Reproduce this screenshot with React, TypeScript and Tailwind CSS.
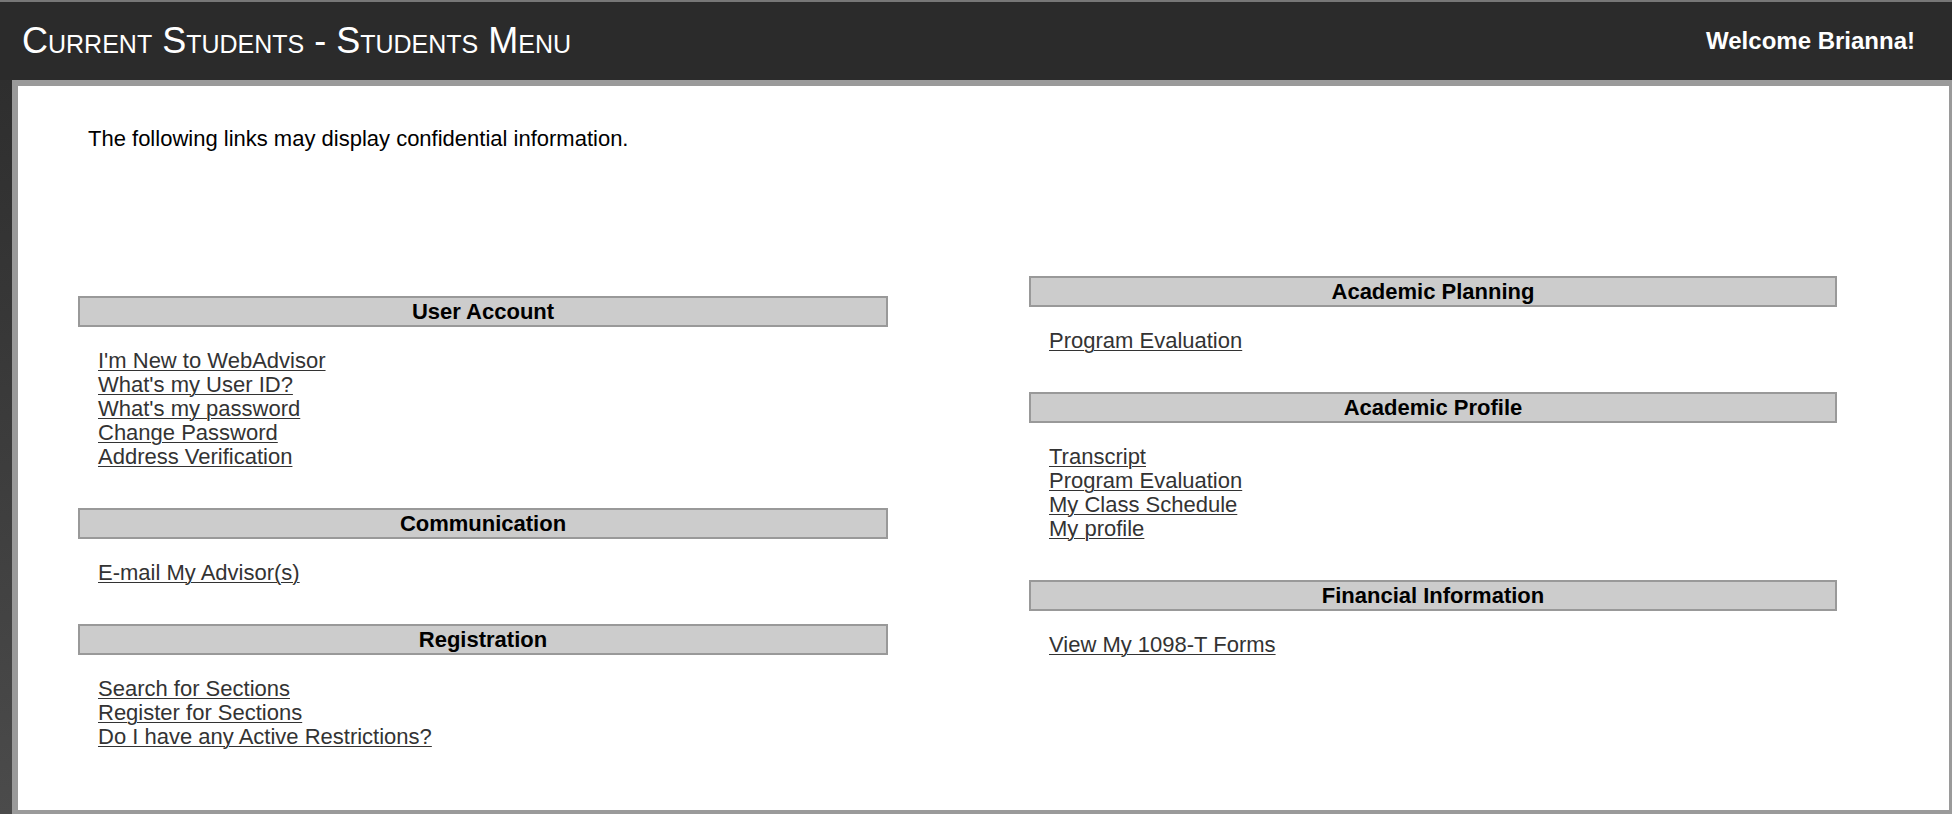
import React from "react";

interface Section {
  title: string;
  links: string[];
}

const leftSections: Section[] = [
  {
    title: "User Account",
    links: [
      "I'm New to WebAdvisor",
      "What's my User ID?",
      "What's my password",
      "Change Password",
      "Address Verification",
    ],
  },
  { title: "Communication", links: ["E-mail My Advisor(s)"] },
  {
    title: "Registration",
    links: [
      "Search for Sections",
      "Register for Sections",
      "Do I have any Active Restrictions?",
    ],
  },
];

const rightSections: Section[] = [
  { title: "Academic Planning", links: ["Program Evaluation"] },
  {
    title: "Academic Profile",
    links: ["Transcript", "Program Evaluation", "My Class Schedule", "My profile"],
  },
  { title: "Financial Information", links: ["View My 1098-T Forms"] },
];

const MenuSection = ({ section }: { section: Section }) => (
  <div className="mb-[39px]">
    <div className="flex h-[31px] items-center justify-center border-2 border-[#999999] bg-[#cccccc] text-[22px] font-bold text-black">
      {section.title}
    </div>
    <ul className="pl-[20px] pt-[22px]">
      {section.links.map((link) => (
        <li key={link} className="text-[22px] leading-[24px]">
          <a
            href="#"
            className="text-[#333333] underline decoration-[#333333] decoration-1 underline-offset-2"
          >
            {link}
          </a>
        </li>
      ))}
    </ul>
  </div>
);

export default function App() {
  return (
    <div className="h-[814px] w-[1952px] overflow-hidden bg-gradient-to-b from-[#2b2b2b] to-[#4b4b4b] font-['Liberation_Sans',Arial,sans-serif]">
      {/* Title bar */}
      <header className="flex h-[80px] items-center justify-between border-t-2 border-[#777777] bg-[#2b2b2b] pl-[22px] pr-[37px] text-white">
        <h1 className="text-[36px] leading-none [font-variant:small-caps]">
          Current Students - Students Menu
        </h1>
        <span className="text-[24px] font-bold">Welcome Brianna!</span>
      </header>

      {/* Content panel */}
      <main className="ml-[12px] h-[736px] w-[1943px] border-[6px] border-[#9a9a9a] bg-white">
        <p className="pl-[70px] pt-[41px] text-[22px] leading-[24px] text-black">
          The following links may display confidential information.
        </p>

        <div className="flex items-start gap-[141px] pl-[60px] pt-[125px]">
          <div className="mt-[20px] w-[810px]">
            {leftSections.map((s) => (
              <MenuSection key={s.title} section={s} />
            ))}
          </div>
          <div className="w-[808px]">
            {rightSections.map((s) => (
              <MenuSection key={s.title} section={s} />
            ))}
          </div>
        </div>
      </main>
    </div>
  );
}
